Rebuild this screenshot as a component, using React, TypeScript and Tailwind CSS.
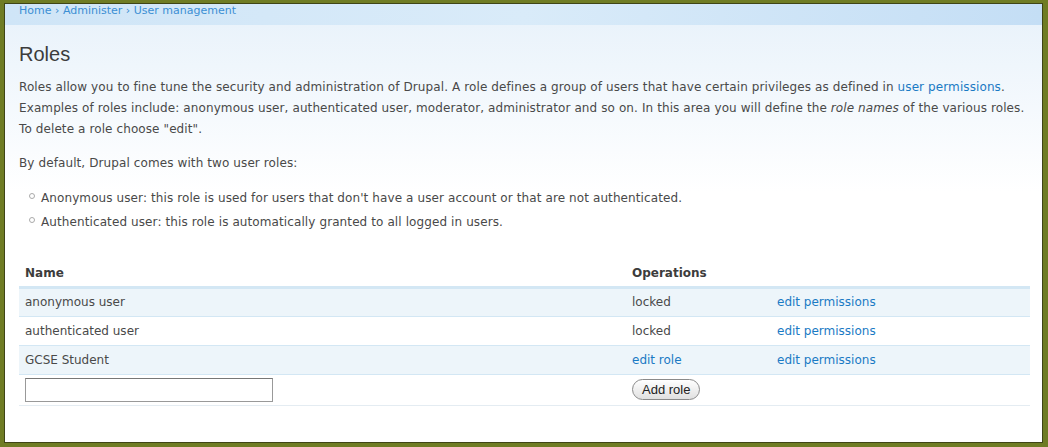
import React from "react";

const rows = [
  { name: "anonymous user", op1: "locked", link1: false },
  { name: "authenticated user", op1: "locked", link1: false },
  { name: "GCSE Student", op1: "edit role", link1: true },
];

export default function App() {
  return (
    <div className="w-[1048px] h-[447px] bg-[#6f7c24] pl-[4px] pt-[3px] pr-[5px] pb-[4px] overflow-hidden">
      <div
        className="h-full w-full border border-[#3f4516] bg-white text-[#494949] flex flex-col"
        style={{ fontFamily: '"DejaVu Sans", Verdana, sans-serif' }}
      >
        <div className="h-[21px] bg-gradient-to-r from-[#cfe5f7] via-[#d9ebf9] to-[#c4def5] px-[14px] text-[11px] leading-[14px] text-[#3b8fd4]">
          Home › Administer › User management
        </div>
        <div className="flex-1 bg-gradient-to-b from-[#eaf3fb] to-white to-[40%] px-[14px] pt-[17px]">
          <h1
            className="text-[20px] leading-[24px] text-[#3c3c3c] mb-[11px]"
            style={{ fontFamily: '"Liberation Sans", Arial, sans-serif' }}
          >
            Roles
          </h1>
          <div className="text-[12px] tracking-[0.1px]">
            <p className="leading-[21px]">
              Roles allow you to fine tune the security and administration of Drupal. A role defines a group of users that have certain privileges as defined in{" "}
              <span className="text-[#1a7ac4]">user permissions</span>. Examples of roles include: anonymous user, authenticated user, moderator, administrator and so on. In this area you will define the <i>role names</i> of the various roles. To delete a role choose "edit".
            </p>
            <p className="leading-[21px] mt-[13px]">By default, Drupal comes with two user roles:</p>
            <ul className="mt-[12px] pl-[10px] leading-[24px]">
              <li className="flex items-start gap-[6px]">
                <span className="mt-[7px] w-[6px] h-[6px] rounded-full border border-[#aaa] shrink-0" />
                Anonymous user: this role is used for users that don't have a user account or that are not authenticated.
              </li>
              <li className="flex items-start gap-[6px]">
                <span className="mt-[7px] w-[6px] h-[6px] rounded-full border border-[#aaa] shrink-0" />
                Authenticated user: this role is automatically granted to all logged in users.
              </li>
            </ul>
          </div>
          <table className="mt-[27px] w-[1011px] text-[12px] border-collapse">
            <thead>
              <tr className="border-b-[3px] border-[#d3e7f4]">
                <th className="text-left font-bold text-[#3c3c3c] pl-[6px] h-[26px] w-[613px]">Name</th>
                <th className="text-left font-bold text-[#3c3c3c] h-[26px]" colSpan={2}>Operations</th>
              </tr>
            </thead>
            <tbody>
              {rows.map((r, i) => (
                <tr key={r.name} className={`border-b border-[#d3e7f4] ${i % 2 === 0 ? "bg-[#edf5fa]" : "bg-white"}`}>
                  <td className="pl-[6px] h-[29px]">{r.name}</td>
                  <td className={`w-[145px] ${r.link1 ? "text-[#1a7ac4]" : ""}`}>{r.op1}</td>
                  <td className="text-[#1a7ac4]">edit permissions</td>
                </tr>
              ))}
              <tr className="border-b border-[#e4ecf2]">
                <td className="pl-[6px] h-[31px]">
                  <div className="w-[248px] h-[24px] border border-[#999] border-t-[#777] bg-white" />
                </td>
                <td colSpan={2}>
                  <button
                    className="h-[21px] px-[9px] rounded-full border border-[#8a8a8a] bg-gradient-to-b from-white to-[#e0e0e0] text-[#222] leading-[18px]"
                    style={{ fontFamily: '"Liberation Sans", Arial, sans-serif', fontSize: "13px" }}
                  >
                    Add role
                  </button>
                </td>
              </tr>
            </tbody>
          </table>
        </div>
      </div>
    </div>
  );
}
